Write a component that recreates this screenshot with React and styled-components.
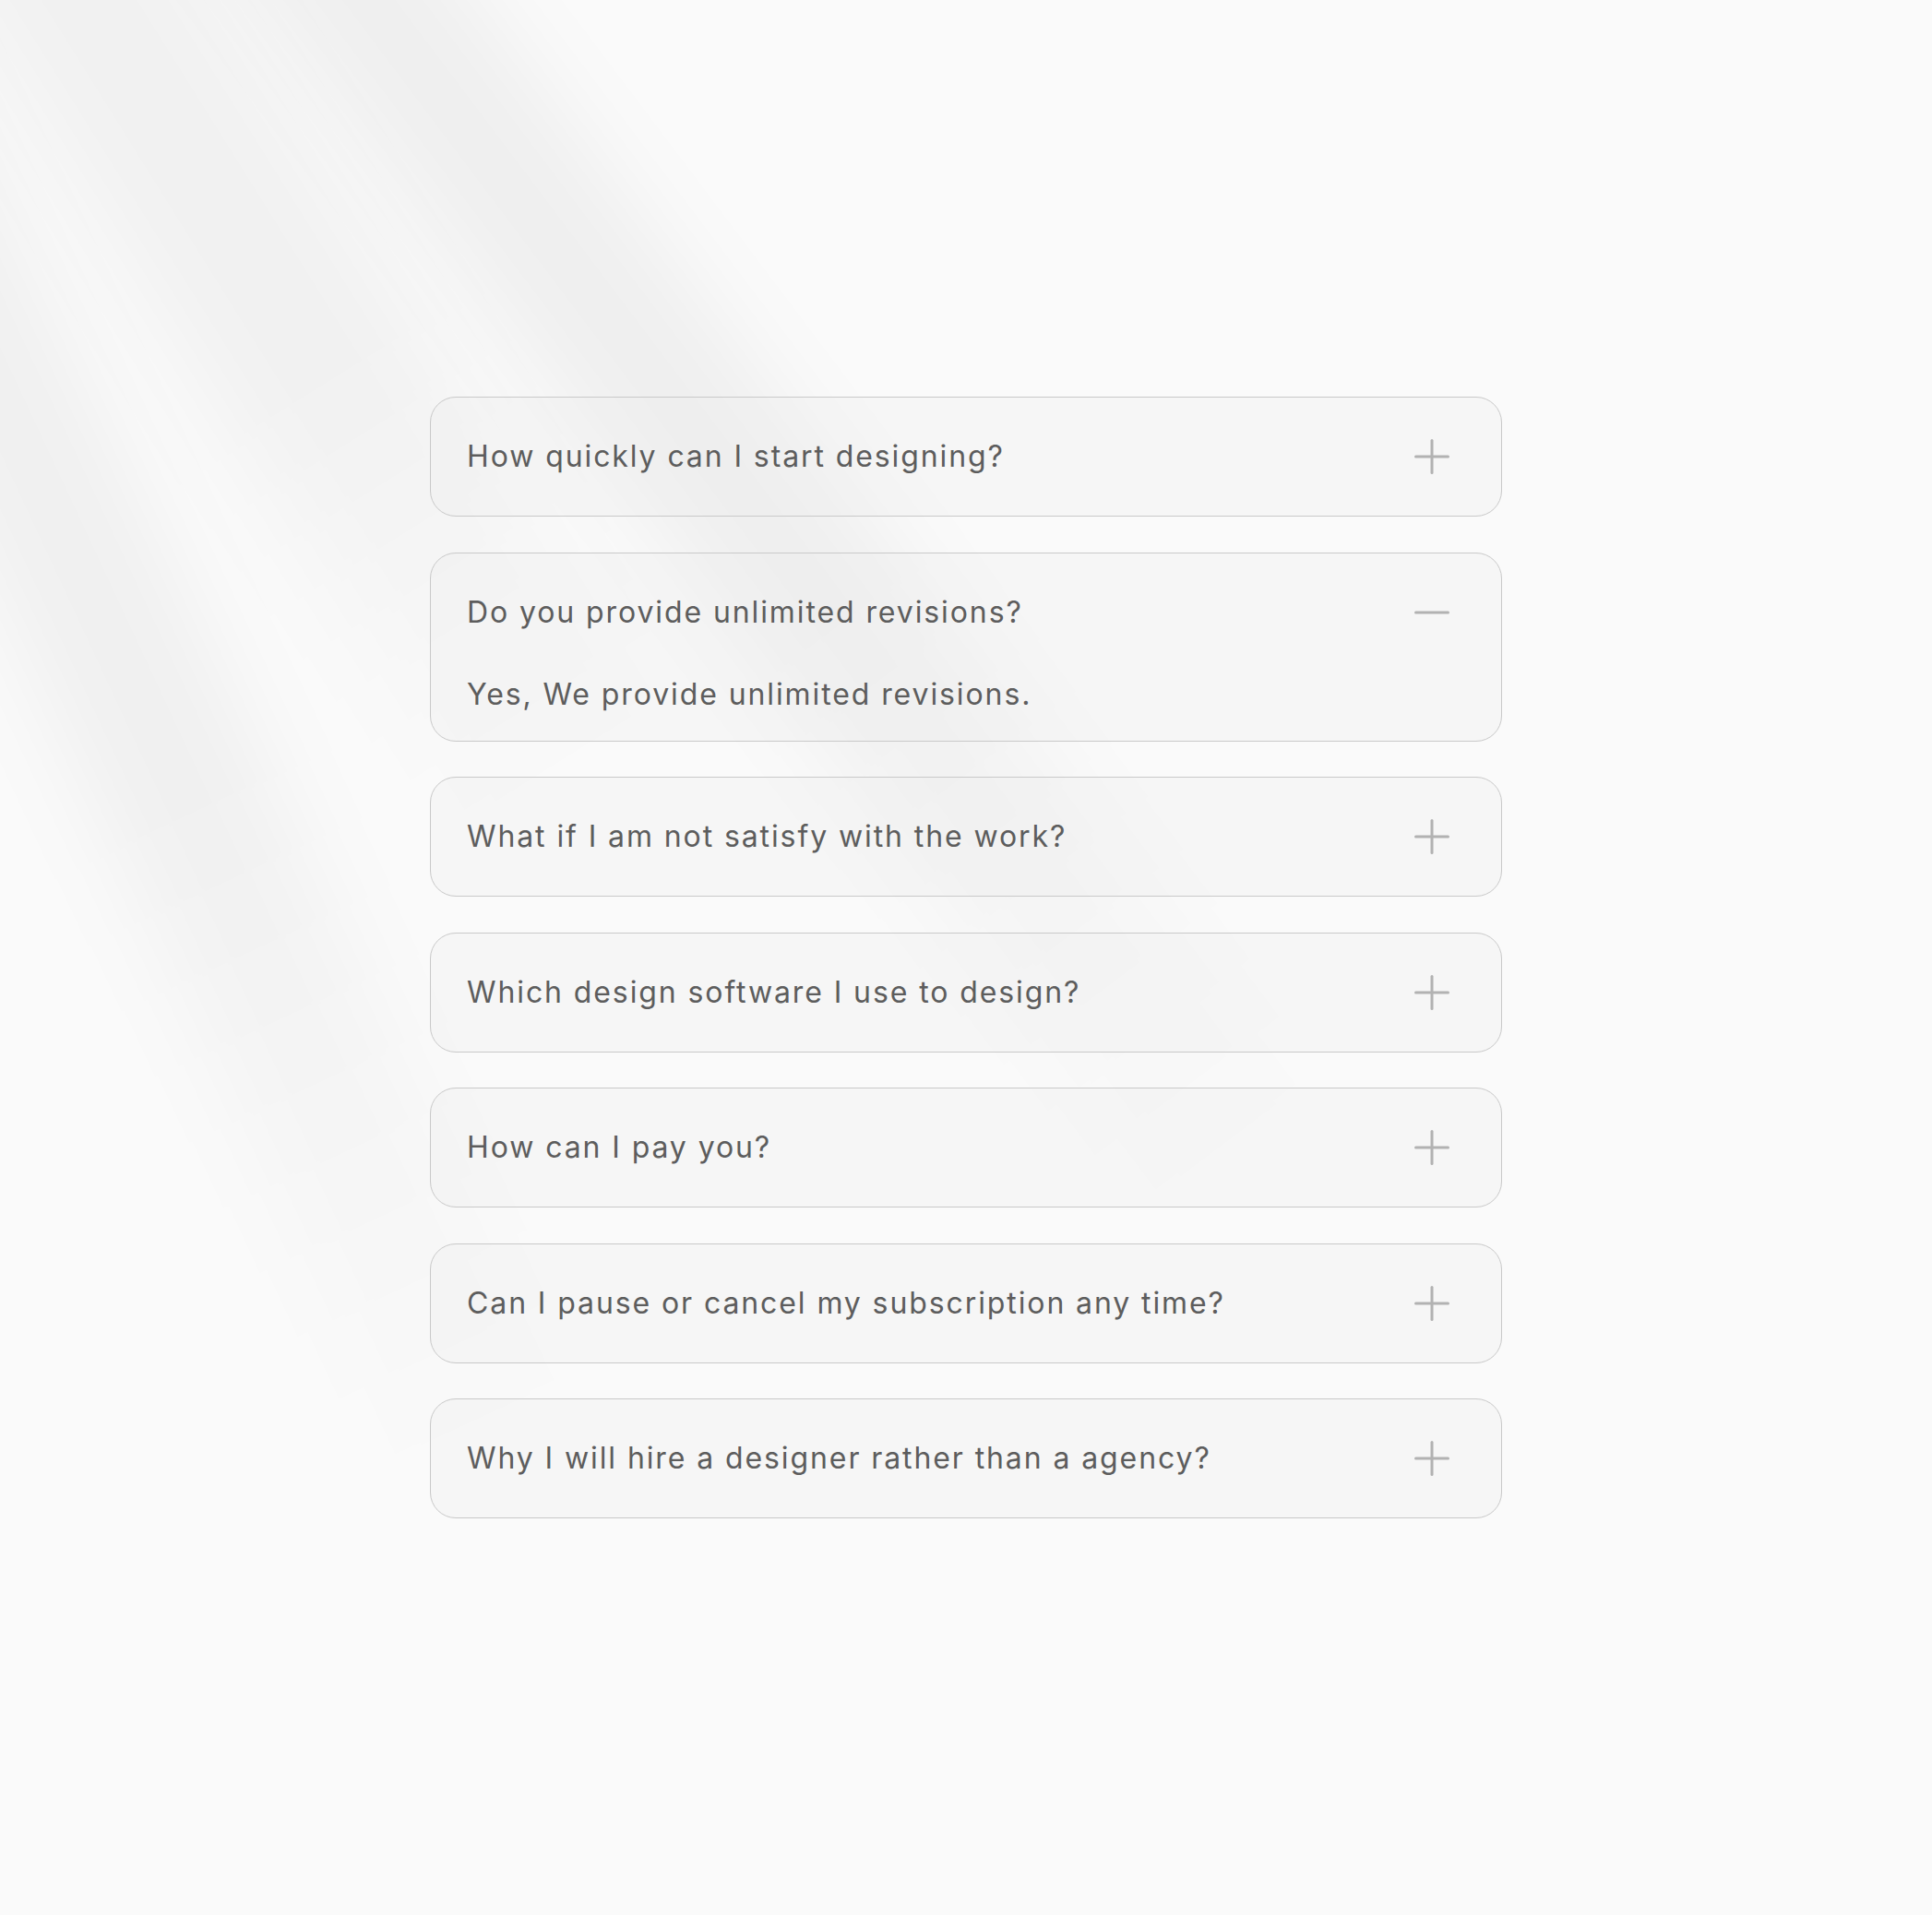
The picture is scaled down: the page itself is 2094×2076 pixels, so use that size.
import React, { useState } from "react";
import styled, { createGlobalStyle } from "styled-components";

const GlobalStyle = createGlobalStyle`
  html, body { margin: 0; padding: 0; background: #fafafa; }
  * { box-sizing: border-box; }
  body { font-family: Inter, "Noto Sans", "Liberation Sans", sans-serif; }
`;

const Page = styled.div`
  position: relative;
  min-height: 2076px;
  overflow: hidden;
  background: #fafafa;
  display: flex;
  justify-content: center;
  padding-top: 430px;
`;

const Backdrop = styled.div`
  position: absolute;
  inset: 0;
  pointer-events: none;
  z-index: 0;
`;

const Band = styled.div`
  position: absolute;
  top: -200px;
  left: ${(p) => p.$x}px;
  width: ${(p) => p.$w}px;
  height: ${(p) => p.$len}px;
  background: linear-gradient(
    to bottom,
    rgba(0, 0, 0, ${(p) => p.$o}) 0%,
    rgba(0, 0, 0, ${(p) => p.$o}) 60%,
    rgba(0, 0, 0, 0) 100%
  );
  filter: blur(${(p) => p.$blur}px);
  transform-origin: top left;
  transform: rotate(${(p) => -p.$deg}deg);
`;

const List = styled.div`
  position: relative;
  z-index: 1;
  width: 1162px;
  display: flex;
  flex-direction: column;
  gap: 38.5px;
`;

const Card = styled.div`
  border: 1.5px solid #c9c9c9;
  border-radius: 28px;
  background: rgba(238, 238, 238, 0.35);
  padding: 0 56px 0 39px;
`;

const Header = styled.button`
  all: unset;
  width: 100%;
  height: 128px;
  display: flex;
  align-items: center;
  justify-content: space-between;
  cursor: pointer;
`;

const Question = styled.span`
  font-family: Inter, "Noto Sans", "Liberation Sans", sans-serif;
  font-size: 32px;
  line-height: 40px;
  font-weight: 400;
  letter-spacing: 1.9px;
  color: #5d5d5d;
`;

const Answer = styled.p`
  margin: 0;
  padding: 5px 0 30px;
  font-family: Inter, "Noto Sans", "Liberation Sans", sans-serif;
  font-size: 32px;
  line-height: 40px;
  font-weight: 400;
  letter-spacing: 1.9px;
  color: #5d5d5d;
`;

const IconBox = styled.svg`
  flex: none;
  width: 38px;
  height: 38px;
`;

const Toggle = ({ open }) => (
  <IconBox viewBox="0 0 38 38" fill="none" stroke="#b2b2b2" strokeWidth="3" strokeLinecap="round">
    <line x1="1.5" y1="19" x2="36.5" y2="19" />
    {!open && <line x1="19" y1="1.5" x2="19" y2="36.5" />}
  </IconBox>
);

const faqs = [
  { q: "How quickly can I start designing?", a: "You can start right away after subscribing." },
  { q: "Do you provide unlimited revisions?", a: "Yes, We provide unlimited revisions." },
  { q: "What if I am not satisfy with the work?", a: "We will keep revising until you are happy." },
  { q: "Which design software I use to design?", a: "I mostly design in Figma." },
  { q: "How can I pay you?", a: "You can pay by card or bank transfer." },
  { q: "Can I pause or cancel my subscription any time?", a: "Yes, you can pause or cancel any time." },
  { q: "Why I will hire a designer rather than a agency?", a: "You get direct communication and faster delivery." },
];

const bands = [
  { x: -400, w: 190, len: 2000, deg: 25, o: 0.04, blur: 45 },
  { x: -170, w: 240, len: 1300, deg: 32, o: 0.035, blur: 50 },
  { x: 130, w: 190, len: 1900, deg: 37, o: 0.045, blur: 45 },
];

export default function App() {
  const [open, setOpen] = useState(1);
  return (
    <>
      <GlobalStyle />
      <Page>
        <Backdrop>
          {bands.map((b, i) => (
            <Band key={i} $x={b.x} $w={b.w} $len={b.len} $deg={b.deg} $o={b.o} $blur={b.blur} />
          ))}
        </Backdrop>
        <List>
          {faqs.map((f, i) => (
            <Card key={i}>
              <Header onClick={() => setOpen(open === i ? -1 : i)}>
                <Question>{f.q}</Question>
                <Toggle open={open === i} />
              </Header>
              {open === i && <Answer>{f.a}</Answer>}
            </Card>
          ))}
        </List>
      </Page>
    </>
  );
}
